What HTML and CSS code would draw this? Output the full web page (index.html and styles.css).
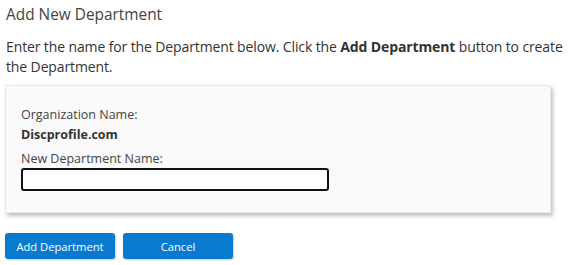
FILE: index.html
```html
<!DOCTYPE html>
<html lang="en">
<head>
  <meta charset="UTF-8">
  <title>Add New Department</title>
  <link rel="stylesheet" href="styles.css">
</head>
<body>
  <div class="page">
    <h2 class="title">Add New Department</h2>
    <p class="intro">Enter the name for the Department below. Click the <strong>Add Department</strong> button to create the Department.</p>

    <div class="card">
      <div class="label">Organization Name:</div>
      <div class="org">Discprofile.com</div>
      <label class="label" for="deptName">New Department Name:</label>
      <input class="field" id="deptName" type="text">
    </div>

    <div class="actions">
      <button class="btn">Add Department</button>
      <button class="btn">Cancel</button>
    </div>
  </div>
</body>
</html>
```

FILE: styles.css
```css
body {
  margin: 0;
  background-color: #fff;
  font-family: "Open Sans", "Noto Sans", sans-serif;
  color: #333;
}
.page {
  padding: 4px 2px 4px 5px;
}
.title {
  font-size: 15.4px;
  font-weight: normal;
  color: #444;
  margin: 0 0 11px 1px;
  line-height: 22px;
}
.intro {
  font-size: 14px;
  line-height: 20px;
  letter-spacing: -0.12px;
  margin: 0 0 8px 1px;
}
.card {
  width: 514px;
  background-color: #fafafa;
  border: 1px solid #e8e8e8;
  box-shadow: 2px 3px 4px rgba(0, 0, 0, 0.25);
  padding: 20px 15px 21px 15px;
  margin-bottom: 20px;
}
.label {
  display: block;
  font-size: 12.5px;
  line-height: 17px;
  color: #444;
}
.org {
  font-size: 12.5px;
  font-weight: bold;
  line-height: 17px;
  margin: 3px 0 7px 0;
}
.field {
  display: block;
  box-sizing: border-box;
  width: 308px;
  height: 23px;
  border: 2px solid #111;
  border-radius: 3px;
  background-color: #fff;
  margin: 1px 0 0 0;
}
.actions {
  display: flex;
  gap: 8px;
}
.btn {
  width: 110px;
  height: 26px;
  background-color: #0a7ad0;
  color: #fff;
  border: none;
  border-radius: 3px;
  font-family: "Open Sans", "Noto Sans", sans-serif;
  font-size: 11.2px;
  box-shadow: 1px 1px 2px rgba(0, 0, 0, 0.2);
}
```
